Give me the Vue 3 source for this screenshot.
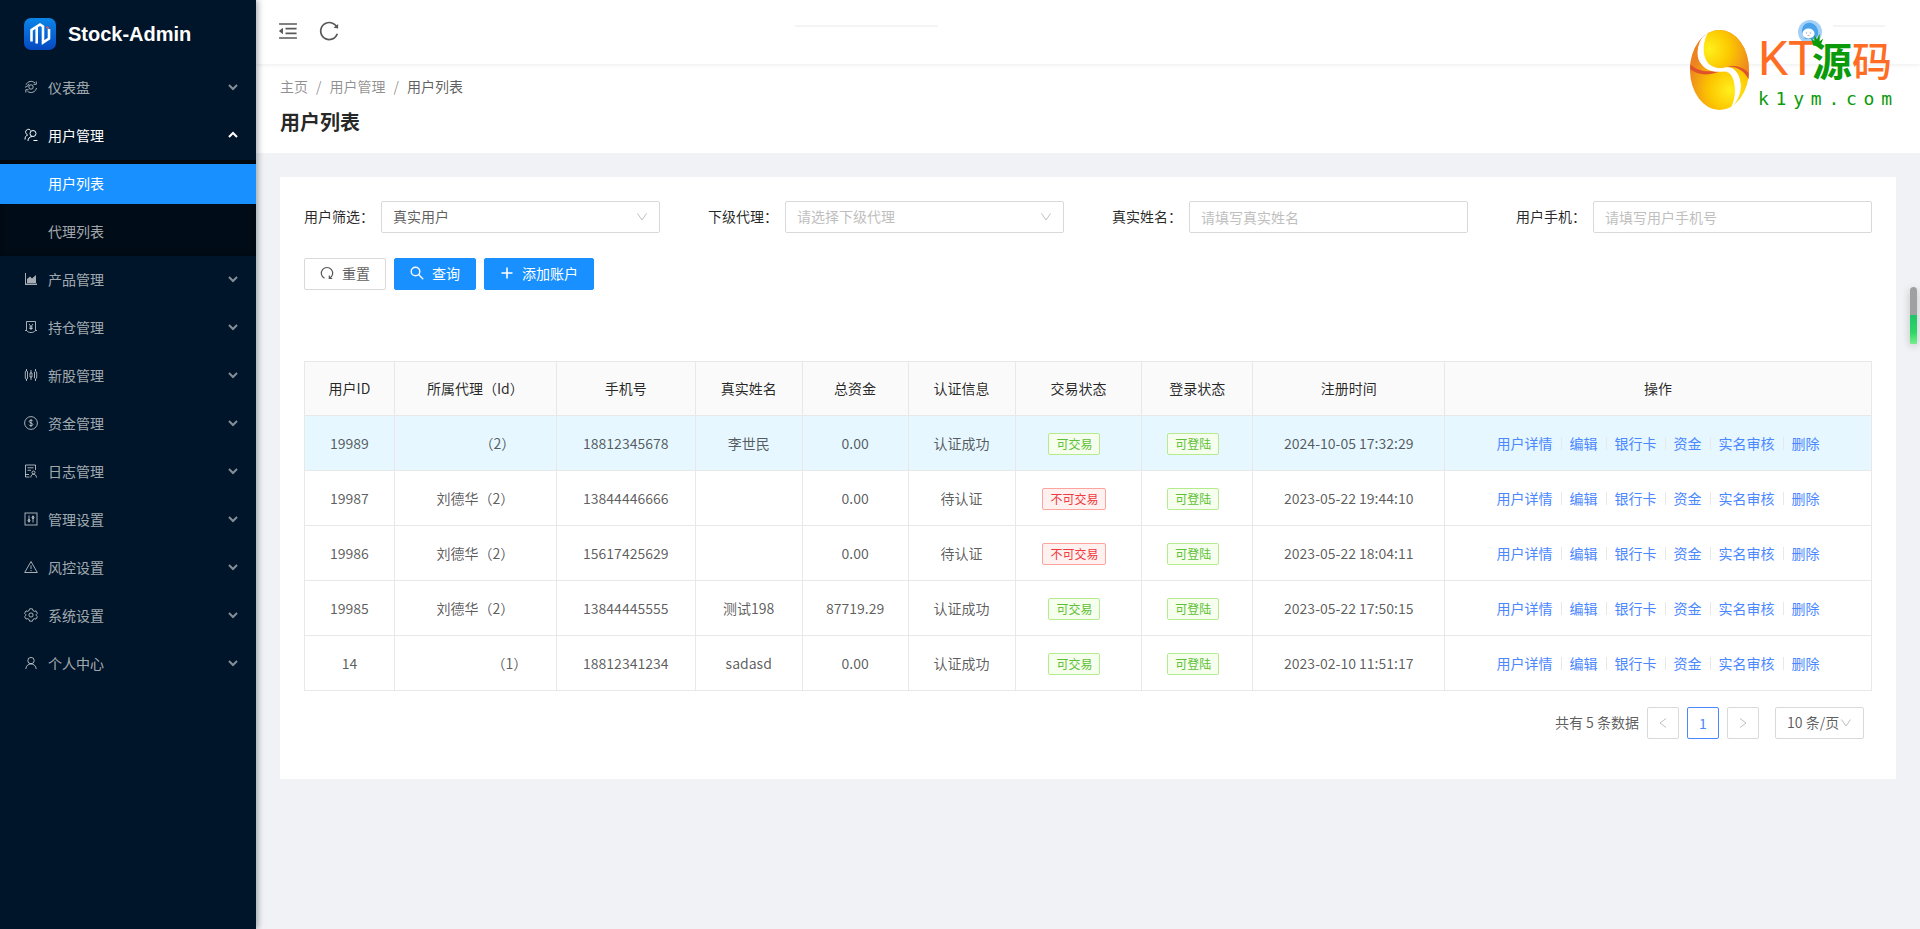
<script setup>
import { ref } from 'vue'

const menu = [
  { icon: 'dashboard', label: '仪表盘' },
  { icon: 'users', label: '用户管理', open: true, children: ['用户列表', '代理列表'] },
  { icon: 'area', label: '产品管理' },
  { icon: 'bill', label: '持仓管理' },
  { icon: 'candles', label: '新股管理' },
  { icon: 'dollar', label: '资金管理' },
  { icon: 'log', label: '日志管理' },
  { icon: 'control', label: '管理设置' },
  { icon: 'warning', label: '风控设置' },
  { icon: 'gear', label: '系统设置' },
  { icon: 'user', label: '个人中心' },
]

const columns = [
  { title: '用户ID', width: 90 },
  { title: '所属代理（Id）', width: 162 },
  { title: '手机号', width: 139 },
  { title: '真实姓名', width: 107 },
  { title: '总资金', width: 106 },
  { title: '认证信息', width: 107 },
  { title: '交易状态', width: 127 },
  { title: '登录状态', width: 111 },
  { title: '注册时间', width: 192 },
  { title: '操作', width: 427 },
]
const total = columns.reduce((sum, c) => sum + c.width, 0)

const rows = [
  { id: '19989', agent: '', blank: 44, agentId: 2, phone: '18812345678', name: '李世民', money: '0.00', auth: '认证成功', trade: true, time: '2024-10-05 17:32:29' },
  { id: '19987', agent: '刘德华', blank: 0, agentId: 2, phone: '13844446666', name: '', money: '0.00', auth: '待认证', trade: false, time: '2023-05-22 19:44:10' },
  { id: '19986', agent: '刘德华', blank: 0, agentId: 2, phone: '15617425629', name: '', money: '0.00', auth: '待认证', trade: false, time: '2023-05-22 18:04:11' },
  { id: '19985', agent: '刘德华', blank: 0, agentId: 2, phone: '13844445555', name: '测试198', money: '87719.29', auth: '认证成功', trade: true, time: '2023-05-22 17:50:15' },
  { id: '14', agent: '', blank: 68, agentId: 1, phone: '18812341234', name: 'sadasd', money: '0.00', auth: '认证成功', trade: true, time: '2023-02-10 11:51:17' },
]

const actions = ['用户详情', '编辑', '银行卡', '资金', '实名审核', '删除']

const userType = ref('real')
const agent = ref('')
const realName = ref('')
const phone = ref('')
const pageSize = ref('10')
</script>

<template>
  <div class="layout">
    <aside class="sider">
      <div class="brand">
        <svg class="brand-mark" viewBox="0 0 32 32" aria-hidden="true">
          <defs>
            <linearGradient id="brandFill" x1="0" y1="0" x2="0" y2="1">
              <stop offset="0" stop-color="#0a86ea" />
              <stop offset="1" stop-color="#0648c0" />
            </linearGradient>
          </defs>
          <rect width="32" height="32" rx="7" fill="url(#brandFill)" />
          <path d="M7.500 23.500V12L16 6.500L19 8.500V24.500L25 20.500V11M12.700 9.500V25.500" fill="none" stroke="#fff" stroke-width="2.600" />
          <path d="M22.500 9l2.500 1.500" stroke="#ff5a3c" stroke-width="1.500" />
        </svg>
        <span class="brand-name">Stock-Admin</span>
      </div>
      <nav class="menu">
        <template v-for="item in menu" :key="item.label">
          <button type="button" class="menu-title" :class="{ open: item.open }">
            <svg class="menu-icon" viewBox="0 0 14 14" fill="none" stroke="currentColor" stroke-width="1" aria-hidden="true">
              <g v-if="item.icon === 'dashboard'">
                <circle cx="7" cy="7" r="2.200" />
                <path d="M2 4.800A5.500 5.500 0 0 1 11 3M12.300 1.500V4.300H9.500M12.500 8A5.600 5.600 0 0 1 3.500 11.300M1.800 12.500V9.700H4.600M1 7.300Q4.300 6.500 5 3.800" />
              </g>
              <g v-else-if="item.icon === 'users'">
                <path d="M3 6.500A2.800 2.800 0 1 1 6.800 2.600M1 11.500C1 9 2 7.500 4 6.700" />
                <circle cx="9" cy="5.500" r="3" />
                <path d="M4 13C4 10.500 5.500 8.800 8 8.500M9.500 12.500H13.500" />
              </g>
              <g v-else-if="item.icon === 'area'" stroke="none" fill="currentColor">
                <path d="M1 1H2V11.500H13V13H1Z" />
                <path d="M3 11V7L6 4.500L8 6.500L12 3V11Z" />
              </g>
              <g v-else-if="item.icon === 'bill'">
                <path d="M2.500 10.500V1.500H11.500V10.500M1 10.500H2.500C4 12 5 12.500 7 12.500S10 12 11.500 10.500H13" />
                <path d="M5 4L7 6.500L9 4M7 6.500V10M5.300 7H8.700M5.300 8.500H8.700" />
              </g>
              <g v-else-if="item.icon === 'candles'">
                <path d="M2.500 1V3M2.500 11V13M1.300 3.500Q2.500 2 3.500 3.500V10.500Q2.500 12 1.300 10.500ZM7 2V5M7 9V12M6 5H8V9H6ZM11.500 1V3M11.500 11V13M10.500 4Q11.500 2 12.700 4V10Q11.500 12 10.500 10Z" />
              </g>
              <g v-else-if="item.icon === 'dollar'">
                <circle cx="7" cy="7" r="6.400" />
                <path d="M8.900 5.200C8.500 3.800 5.200 3.800 5.200 5.500S8.900 6.800 8.900 8.500S5.300 10.200 5 8.700M7 3.200V10.800" />
              </g>
              <g v-else-if="item.icon === 'log'">
                <path d="M5.500 13H1.500V1H11.500V6M3.500 3.800H9.500M3.500 6.300H7M1.500 10.500H5" />
                <circle cx="9.500" cy="8.500" r="1.500" />
                <path d="M6.800 13.500C6.800 11.500 8 10.200 9.500 10.200S12.500 11.500 12.500 13.500" />
              </g>
              <g v-else-if="item.icon === 'control'">
                <rect x="1" y="1" width="12" height="12" />
                <path d="M5 3.500V10.500M9 3.500V10.500" />
                <circle cx="5" cy="8.500" r="1" />
                <circle cx="9" cy="5.500" r="1" />
              </g>
              <g v-else-if="item.icon === 'warning'">
                <path d="M7 1.500L13.300 12.500H0.700ZM7 5.500V9M7 10V11.200" />
              </g>
              <g v-else-if="item.icon === 'gear'">
                <path d="M5.600 0.800H8.400L8.900 2.500L10.300 3.300L12 2.900L13.400 5.300L12.200 6.500V7.500L13.400 8.700L12 11.100L10.300 10.700L8.900 11.500L8.400 13.200H5.600L5.100 11.500L3.700 10.700L2 11.100L0.600 8.700L1.800 7.500V6.500L0.600 5.300L2 2.900L3.700 3.300L5.100 2.500Z" />
                <circle cx="7" cy="7" r="2.100" />
              </g>
              <g v-else>
                <circle cx="7" cy="4.600" r="3.200" />
                <path d="M1.800 13C2 10 4.200 7.900 7 7.900S12 10 12.200 13" />
              </g>
            </svg>
            <span class="menu-text">{{ item.label }}</span>
            <svg class="menu-arrow" viewBox="0 0 10 10" fill="none" stroke="currentColor" stroke-width="2" aria-hidden="true">
              <path :d="item.open ? 'M1 7L5 3L9 7' : 'M1 3L5 7L9 3'" />
            </svg>
          </button>
          <div v-if="item.children" class="submenu">
            <a v-for="(child, i) in item.children" :key="child" href="#" class="submenu-item" :class="{ active: i === 0 }">{{ child }}</a>
          </div>
        </template>
      </nav>
    </aside>

    <div class="main">
      <header class="topbar">
        <button type="button" class="icon-button" aria-label="收起菜单">
          <svg viewBox="64 64 896 896" fill="currentColor">
            <path d="M408 442h480c4.400 0 8-3.600 8-8v-56c0-4.400-3.600-8-8-8H408c-4.400 0-8 3.600-8 8v56c0 4.400 3.600 8 8 8zm-8 204c0 4.400 3.600 8 8 8h480c4.400 0 8-3.600 8-8v-56c0-4.400-3.600-8-8-8H408c-4.400 0-8 3.600-8 8v56zm504-486H120c-4.400 0-8 3.600-8 8v56c0 4.400 3.600 8 8 8h784c4.400 0 8-3.600 8-8v-56c0-4.400-3.600-8-8-8zm0 632H120c-4.400 0-8 3.600-8 8v56c0 4.400 3.600 8 8 8h784c4.400 0 8-3.600 8-8v-56c0-4.400-3.600-8-8-8zM115.400 518.900L271.700 642c5.800 4.600 14.400.5 14.400-6.900V388.900c0-7.400-8.500-11.500-14.400-6.900L115.400 505.100a8.740 8.740 0 0 0 0 13.800z" />
          </svg>
        </button>
        <button type="button" class="icon-button" aria-label="刷新">
          <svg viewBox="64 64 896 896" fill="currentColor">
            <path d="M909.100 209.300l-56.400 44.100C775.800 155.100 656.200 92 521.900 92 290 92 102.300 279.500 102 511.500 101.700 743.700 289.800 932 521.900 932c181.300 0 335.800-115 394.600-276.100 1.500-4.200-.7-8.900-4.900-10.300l-56.700-19.500a8 8 0 0 0-10.100 4.800c-1.800 5-3.800 10-5.900 14.900-17.300 41-42.100 77.800-73.700 109.400A344.770 344.770 0 0 1 655.900 829c-42.300 17.900-87.400 27-133.800 27-46.500 0-91.500-9.100-133.800-27A341.500 341.500 0 0 1 279 755.200a342.160 342.160 0 0 1-73.700-109.400c-17.900-42.400-27-87.400-27-133.900s9.100-91.500 27-133.900c17.300-41 42.100-77.800 73.700-109.400 31.600-31.600 68.400-56.400 109.300-73.800 42.300-17.900 87.400-27 133.800-27 46.500 0 91.500 9.100 133.800 27a341.500 341.500 0 0 1 109.300 73.800c9.900 9.900 19.200 20.400 27.800 31.400l-60.200 47a8 8 0 0 0 3 14.100l175.600 43c5 1.200 9.900-2.600 9.900-7.700l.8-180.900c-.1-6.600-7.800-10.300-13-6.200z" />
          </svg>
        </button>
      </header>

      <section class="page-head">
        <nav class="breadcrumb" aria-label="面包屑">
          <a href="#">主页</a><span class="slash">/</span><a href="#">用户管理</a><span class="slash">/</span><span class="current">用户列表</span>
        </nav>
        <h1>用户列表</h1>
      </section>

      <main class="card">
        <form class="filters" @submit.prevent>
          <div class="field">
            <label for="f-type">用户筛选：</label>
            <div class="select-box">
              <select id="f-type" v-model="userType">
                <option value="real">真实用户</option>
              </select>
              <svg class="caret" viewBox="0 0 12 12" fill="none" stroke="currentColor" aria-hidden="true"><path d="M1.500 2.500L6 9L10.500 2.500" /></svg>
            </div>
          </div>
          <div class="field">
            <label for="f-agent">下级代理：</label>
            <div class="select-box">
              <select id="f-agent" v-model="agent" :class="{ empty: !agent }">
                <option value="">请选择下级代理</option>
              </select>
              <svg class="caret" viewBox="0 0 12 12" fill="none" stroke="currentColor" aria-hidden="true"><path d="M1.500 2.500L6 9L10.500 2.500" /></svg>
            </div>
          </div>
          <div class="field">
            <label for="f-name">真实姓名：</label>
            <input id="f-name" v-model="realName" type="text" placeholder="请填写真实姓名">
          </div>
          <div class="field">
            <label for="f-phone">用户手机：</label>
            <input id="f-phone" v-model="phone" type="text" placeholder="请填写用户手机号">
          </div>
        </form>

        <div class="buttons">
          <button type="button" class="btn">
            <svg viewBox="0 0 14 14" fill="none" stroke="currentColor" stroke-width="1.200" aria-hidden="true"><path d="M4.500 12.300A5.700 5.700 0 1 1 9.500 12.300M9.300 9.600V12.500H12.200" /></svg>
            <span>重置</span>
          </button>
          <button type="button" class="btn primary">
            <svg viewBox="0 0 14 14" fill="none" stroke="currentColor" stroke-width="1.400" aria-hidden="true"><circle cx="5.500" cy="5.500" r="4.300" /><path d="M8.600 8.600L13.200 13.200" /></svg>
            <span>查询</span>
          </button>
          <button type="button" class="btn primary">
            <svg viewBox="0 0 14 14" fill="none" stroke="currentColor" stroke-width="1.600" aria-hidden="true"><path d="M7 1.500V12.500M1.500 7H12.500" /></svg>
            <span>添加账户</span>
          </button>
        </div>

        <table class="grid">
          <colgroup>
            <col v-for="c in columns" :key="c.title" :style="{ width: (c.width / total) * 100 + '%' }">
          </colgroup>
          <thead>
            <tr>
              <th v-for="c in columns" :key="c.title" scope="col">{{ c.title }}</th>
            </tr>
          </thead>
          <tbody>
            <tr v-for="(row, i) in rows" :key="row.id" :class="{ hover: i === 0 }">
              <td>{{ row.id }}</td>
              <td><span v-if="row.blank" class="blank" :style="{ width: row.blank + 'px' }"></span>{{ row.agent }}（{{ row.agentId }}）</td>
              <td>{{ row.phone }}</td>
              <td>{{ row.name }}</td>
              <td>{{ row.money }}</td>
              <td>{{ row.auth }}</td>
              <td><span class="tag" :class="row.trade ? 'green' : 'red'">{{ row.trade ? '可交易' : '不可交易' }}</span></td>
              <td><span class="tag green">可登陆</span></td>
              <td>{{ row.time }}</td>
              <td>
                <div class="actions">
                  <a v-for="a in actions" :key="a" href="#">{{ a }}</a>
                </div>
              </td>
            </tr>
          </tbody>
        </table>

        <div class="pagination">
          <span class="count">共有 5 条数据</span>
          <button type="button" class="page" disabled aria-label="上一页">
            <svg viewBox="0 0 12 12" fill="none" stroke="currentColor"><path d="M9 1.500L3 6L9 10.500" /></svg>
          </button>
          <button type="button" class="page current">1</button>
          <button type="button" class="page" disabled aria-label="下一页">
            <svg viewBox="0 0 12 12" fill="none" stroke="currentColor"><path d="M3 1.500L9 6L3 10.500" /></svg>
          </button>
          <div class="select-box size">
            <select v-model="pageSize" aria-label="每页条数">
              <option value="10">10 条/页</option>
            </select>
            <svg class="caret" viewBox="0 0 12 12" fill="none" stroke="currentColor" aria-hidden="true"><path d="M1.500 2.500L6 9L10.500 2.500" /></svg>
          </div>
        </div>
      </main>
    </div>

    <i class="streak middle"></i>
    <i class="streak end"></i>

    <svg class="avatar" viewBox="0 0 24 24" aria-hidden="true">
      <circle cx="12" cy="12" r="12" fill="#a3d0f7" />
      <path d="M4 13C3 5 9 2 13 3S21 8 20 15L17 19H7Z" fill="#4aa3ea" />
      <ellipse cx="10.500" cy="13.500" rx="6" ry="5" fill="#fff" />
      <circle cx="8.500" cy="13" r="0.800" fill="#9fb4dc" />
      <circle cx="12.500" cy="13" r="0.800" fill="#9fb4dc" />
      <path d="M9.500 15.500h2" stroke="#f09aa8" />
    </svg>

    <div class="watermark">
      <svg class="wm-ball" viewBox="0 0 59 80" aria-hidden="true">
        <defs>
          <radialGradient id="ballTop" gradientUnits="userSpaceOnUse" cx="19" cy="19" r="42">
            <stop offset="0" stop-color="#fff01c" />
            <stop offset="0.500" stop-color="#fcc800" />
            <stop offset="1" stop-color="#ee8a1e" />
          </radialGradient>
          <radialGradient id="ballBottom" gradientUnits="userSpaceOnUse" cx="40" cy="60" r="44">
            <stop offset="0" stop-color="#fff01c" />
            <stop offset="0.500" stop-color="#fcc400" />
            <stop offset="1" stop-color="#ec8320" />
          </radialGradient>
          <clipPath id="ballClip"><ellipse cx="29.500" cy="40" rx="29.500" ry="40" /></clipPath>
        </defs>
        <g clip-path="url(#ballClip)">
          <rect width="59" height="80" fill="url(#ballBottom)" />
          <path d="M17 0H59V50C54 40 47 36 38 37C28 40 22 38 17 33C11 26 12 11 18 2Z" fill="url(#ballTop)" />
          <path d="M17 3C8 13 5 28 11 34C14 39 18 41 23 42C14 45 5 43 0 38V16Z" fill="url(#ballBottom)" />
          <path d="M0 34C7 41 17 43 32 40C22 46 8 46 0 39ZM36 37C46 34 54 38 59 43V50C54 40 46 36 36 37Z" fill="#e0522c" />
          <path d="M17 2C7 12 6 27 11 33C16 41 25 42 34 41C41 41 44 48 45 55C46 64 45 71 41 78C50 68 52 57 49 48C46 39 41 37 35 38C27 40 20 37 16 31C11 22 13 10 18 2Z" fill="#fff" stroke="#fff" />
        </g>
      </svg>
      <div class="wm-text">
        <div class="wm-title">
          <span class="kt">KT</span><span class="yuan">源</span><span class="ma">码</span>
          <svg class="crown" viewBox="0 0 16 14" aria-hidden="true"><path d="M1 5L5 9L5 2L8 7L11 0L11 9L15 6L12 14H4Z" fill="#0a9a0a" /></svg>
        </div>
        <div class="wm-site"><span v-for="(ch, i) in 'k1ym.com'" :key="i">{{ ch }}</span></div>
      </div>
    </div>

    <div class="side-meter"><i></i></div>
  </div>
</template>

<style>
html,
body {
  margin: 0;
  background: #f0f2f5;
}
</style>

<style scoped>
* {
  box-sizing: border-box;
}
.layout {
  position: relative;
  display: flex;
  min-height: 100vh;
  font-family: "Noto Sans CJK SC", sans-serif;
  font-size: 14px;
  line-height: 22px;
  color: rgba(0, 0, 0, 0.65);
}
button,
input,
select {
  font: inherit;
  color: inherit;
}
a {
  color: inherit;
  text-decoration: none;
}
button {
  cursor: pointer;
}

/* Sidebar */
.sider {
  position: relative;
  z-index: 2;
  flex: 0 0 256px;
  background: #001529;
  box-shadow: 2px 0 6px rgba(0, 21, 41, 0.35);
}
.brand {
  display: flex;
  align-items: center;
  gap: 12px;
  height: 68px;
  padding-left: 24px;
}
.brand-mark {
  width: 32px;
  height: 32px;
}
.brand-name {
  color: #fff;
  font: bold 20px/32px "Liberation Sans", sans-serif;
}
.menu {
  display: flex;
  flex-direction: column;
}
.menu-title {
  display: flex;
  align-items: center;
  gap: 10px;
  width: 100%;
  height: 40px;
  margin-bottom: 8px;
  padding: 0 18px 2px 24px;
  border: 0;
  background: none;
  color: rgba(255, 255, 255, 0.65);
  text-align: left;
}
.menu-title.open {
  margin-bottom: 4px;
  color: #fff;
}
.menu-icon {
  width: 14px;
  height: 14px;
}
.menu-text {
  flex: 1;
}
.menu-arrow {
  width: 10px;
  height: 10px;
  opacity: 0.8;
}
.menu-title.open .menu-arrow {
  opacity: 1;
}
.submenu {
  display: flex;
  flex-direction: column;
  gap: 8px;
  margin-bottom: 4px;
  padding: 4px 0;
  background: #000c17;
  box-shadow: inset 0 2px 8px rgba(0, 0, 0, 0.45);
}
.submenu-item {
  padding: 0 0 2px 48px;
  line-height: 38px;
  color: rgba(255, 255, 255, 0.65);
}
.submenu-item.active {
  background: #1890ff;
  color: #fff;
}

/* Top bar and page heading */
.main {
  flex: 1;
  min-width: 0;
}
.topbar {
  position: relative;
  z-index: 1;
  display: flex;
  align-items: center;
  gap: 21px;
  height: 64px;
  padding: 0 22px 2px;
  background: #fff;
  box-shadow: 0 1px 4px rgba(0, 21, 41, 0.08);
}
.icon-button {
  display: flex;
  padding: 0;
  border: 0;
  background: none;
}
.icon-button svg {
  width: 20px;
  height: 20px;
}
.page-head {
  padding: 11px 24px 15px;
  background: #fff;
}
.breadcrumb {
  color: rgba(0, 0, 0, 0.45);
}
.breadcrumb .current {
  color: rgba(0, 0, 0, 0.65);
}
.slash {
  margin: 0 8px;
}
h1 {
  margin: 9px 0 0;
  color: rgba(0, 0, 0, 0.85);
  font-size: 20px;
  font-weight: 700;
  line-height: 32px;
}

/* Content card */
.card {
  margin: 24px;
  padding: 24px;
  background: #fff;
}
.filters {
  display: grid;
  grid-template-columns: repeat(4, minmax(0, 1fr));
  column-gap: 48px;
}
.field {
  display: flex;
  align-items: center;
}
.field label {
  flex: 0 0 77px;
  padding-bottom: 2px;
  color: rgba(0, 0, 0, 0.85);
}
.field > input,
.select-box {
  flex: 1;
  min-width: 0;
}
.select-box {
  position: relative;
}
.field > input,
select {
  width: 100%;
  height: 32px;
  padding: 0 11px;
  border: 1px solid #d9d9d9;
  border-radius: 2px;
  background: #fff;
  appearance: none;
  outline: none;
}
select {
  display: block;
  padding-bottom: 2px;
}
select.empty,
input::placeholder {
  color: #bfbfbf;
}
.caret {
  position: absolute;
  top: 10px;
  right: 12px;
  width: 12px;
  height: 12px;
  color: #bfbfbf;
  pointer-events: none;
}
.buttons {
  display: flex;
  gap: 8px;
  margin: 25px 0 71px;
}
.btn {
  display: flex;
  align-items: center;
  gap: 8px;
  height: 32px;
  padding: 0 15px 2px;
  border: 1px solid #d9d9d9;
  border-radius: 2px;
  background: #fff;
}
.btn svg {
  width: 14px;
  height: 14px;
}
.btn.primary {
  border-color: #1890ff;
  background: #1890ff;
  color: #fff;
}

/* Table */
.grid {
  width: 100%;
  table-layout: fixed;
  border: solid #e8e8e8;
  border-width: 1px 0 0 1px;
  border-spacing: 0;
  text-align: center;
}
th,
td {
  height: 55px;
  padding: 0 8px;
  border: solid #e8e8e8;
  border-width: 0 1px 1px 0;
}
th {
  height: 54px;
  padding-bottom: 2px;
  background: #fafafa;
  color: rgba(0, 0, 0, 0.85);
  font-weight: 400;
}
.hover td {
  background: #e6f7ff;
}
.blank {
  display: inline-block;
}
.tag {
  display: inline-block;
  margin-right: 8px;
  padding: 0 7px;
  border: 1px solid;
  border-radius: 2px;
  font-size: 12px;
  line-height: 20px;
}
.tag.green {
  border-color: #b7eb8f;
  background: #f6ffed;
  color: #5fc038;
}
.tag.red {
  border-color: #ffa39e;
  background: #fff1f0;
  color: #f03a3f;
}
.actions {
  display: flex;
  align-items: center;
  justify-content: center;
  color: #4b87ff;
  white-space: nowrap;
}
.actions a + a {
  display: flex;
  align-items: center;
}
.actions a + a::before {
  width: 1px;
  height: 13px;
  margin: 0 8px;
  background: #e8e8e8;
  content: "";
}

/* Pagination */
.pagination {
  display: flex;
  justify-content: flex-end;
  gap: 8px;
  margin: 16px 8px;
}
.count {
  line-height: 30px;
}
.page {
  display: flex;
  align-items: center;
  justify-content: center;
  width: 32px;
  height: 32px;
  padding: 0;
  border: 1px solid #d9d9d9;
  border-radius: 2px;
  background: #fff;
}
.page:disabled {
  color: #bfbfbf;
}
.page svg {
  width: 12px;
  height: 12px;
}
.page.current {
  border-color: #4b87ff;
  color: #4b87ff;
}
.size {
  flex: 0 0 89px;
  margin-left: 8px;
}

/* Overlays */
.streak {
  position: absolute;
  z-index: 2;
  top: 25px;
  height: 2px;
  background: #f4f4f4;
}
.streak.middle {
  left: 795px;
  width: 143px;
}
.streak.end {
  right: 35px;
  width: 52px;
}
.avatar {
  position: absolute;
  z-index: 3;
  top: 20px;
  right: 98px;
  width: 24px;
  height: 24px;
}
.watermark {
  position: absolute;
  z-index: 3;
  top: 30px;
  right: 28px;
  display: flex;
  gap: 9px;
}
.wm-ball {
  width: 59px;
  height: 80px;
}
.wm-title {
  position: relative;
  display: flex;
  align-items: center;
  height: 58px;
  color: #ff6d24;
  font-size: 40px;
  line-height: 58px;
}
.kt {
  width: 54px;
  font-family: Roboto, sans-serif;
  font-size: 48px;
}
.yuan {
  color: #0a9a0a;
  font-weight: 700;
}
.ma {
  font-weight: 500;
}
.crown {
  position: absolute;
  top: 3px;
  left: 52px;
  width: 14px;
  height: 13px;
}
.wm-site {
  display: flex;
  justify-content: space-between;
  color: #0a9a0a;
  font-family: "DejaVu Sans Mono", monospace;
  font-size: 18px;
  line-height: 22px;
}
.side-meter {
  position: fixed;
  z-index: 3;
  top: 287px;
  right: 3px;
  width: 7px;
  height: 57px;
  border-radius: 4px 4px 2px 2px;
  background: #a0a0a2;
  box-shadow: 0 2px 8px rgba(0, 0, 0, 0.2);
  overflow: hidden;
}
.side-meter i {
  display: block;
  height: 29px;
  margin-top: 28px;
  background: linear-gradient(#1fc468, #2fd565 60%, #74f08a);
}
</style>
